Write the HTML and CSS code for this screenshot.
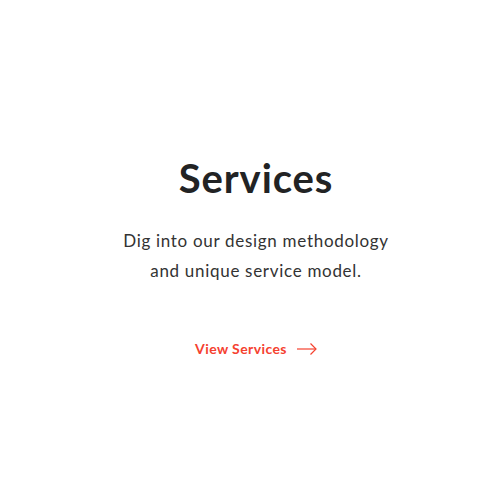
FILE: index.html
```html
<!DOCTYPE html>
<html>
<head>
<meta charset="utf-8">
<link rel="stylesheet" href="styles.css">
</head>
<body>
<section class="services">
  <h1 class="title">Services</h1>
  <p class="lead">Dig into our design methodology<br>and unique service model.</p>
  <a class="cta" href="#">View Services
    <svg class="arrow" width="20" height="12" viewBox="0 0 20 12" fill="none" stroke="currentColor" stroke-width="1.2">
      <path d="M0 6H19"/>
      <path d="M13.5 0.5L19 6L13.5 11.5"/>
    </svg>
  </a>
</section>
</body>
</html>
```
FILE: styles.css
```css
html, body {
  margin: 0;
  padding: 0;
  background: #fff;
}
body {
  width: 500px;
  height: 500px;
  font-family: Lato, "Liberation Sans", sans-serif;
}
.services {
  display: flex;
  flex-direction: column;
  align-items: center;
  padding-top: 152px;
  padding-left: 12px;
  text-align: center;
}
.title {
  margin: 0;
  font-size: 40px;
  line-height: 52px;
  font-weight: 700;
  letter-spacing: 0.9px;
  color: #222324;
}
.lead {
  margin: 22px 0 0;
  font-size: 17px;
  line-height: 30px;
  letter-spacing: 0.7px;
  color: #333;
}
.cta {
  margin-top: 54px;
  display: flex;
  align-items: center;
  gap: 10px;
  font-size: 14px;
  font-weight: 700;
  letter-spacing: 0.4px;
  color: #f5412f;
  text-decoration: none;
}
.arrow {
  display: block;
}
```
